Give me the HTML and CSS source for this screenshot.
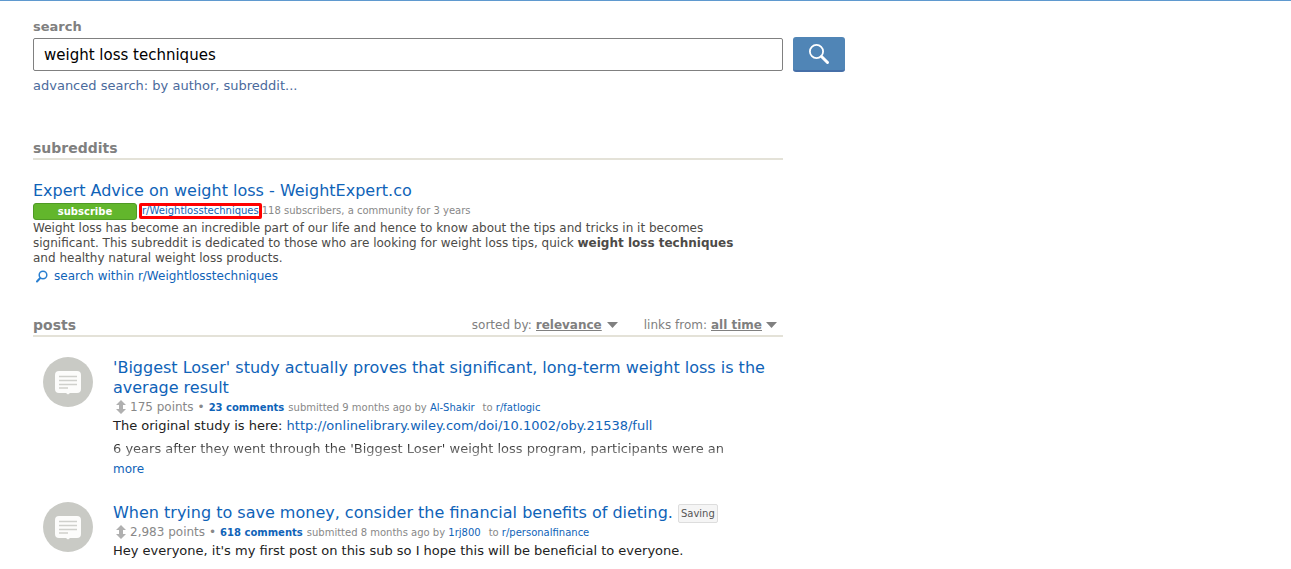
FILE: index.html
```html
<!DOCTYPE html>
<html lang="en">
<head>
    <meta charset="UTF-8">
    <meta name="viewport" content="width=device-width, initial-scale=1.0">
    <link rel="stylesheet" href="styles.css">
    <title>search results - weight loss techniques</title>
</head>
<body>
    <main class="content">
        <form class="search-form">
            <label class="search-label" for="search-input">search</label>
            <div class="search-row">
                <input type="text" id="search-input" class="search-input" name="q" value="weight loss techniques">
                <button type="submit" class="search-button" aria-label="search">
                    <svg width="22" height="22" viewBox="0 0 22 22">
                        <circle cx="8.5" cy="8.5" r="6.6" fill="none" stroke="#fff" stroke-width="1.8"/>
                        <path d="M13.5 13.5L19.5 19.5" stroke="#fff" stroke-width="3" stroke-linecap="round"/>
                    </svg>
                </button>
            </div>
            <a class="advanced" href="#">advanced search: by author, subreddit...</a>
        </form>

        <section class="subreddits">
            <header class="section-header">
                <h2 class="section-title">subreddits</h2>
            </header>
            <div class="subreddit">
                <a class="result-title" href="#">Expert Advice on weight loss - WeightExpert.co</a>
                <div class="subreddit-meta">
                    <button type="button" class="subscribe">subscribe</button>
                    <a class="highlighted" href="#">r/Weightlosstechniques</a>
                    <span>118 subscribers, a community for 3 years</span>
                </div>
                <p class="description">Weight loss has become an incredible part of our life and hence to know about the tips and tricks in it becomes significant. This subreddit is dedicated to those who are looking for weight loss tips, quick <strong>weight loss techniques</strong> and healthy natural weight loss products.</p>
                <a class="search-within" href="#">
                    <svg width="12" height="14" viewBox="0 0 12 14" fill="none" stroke="#2a7fd0" stroke-linecap="round">
                        <circle cx="7" cy="6" r="3.8" stroke-width="1.5"/>
                        <path d="M4 9.300L1 12.500" stroke-width="2"/>
                    </svg>
                    search within r/Weightlosstechniques
                </a>
            </div>
        </section>

        <section class="posts">
            <header class="section-header">
                <h2 class="section-title">posts</h2>
                <div class="menus">
                    <div class="menu">
                        <label for="sort">sorted by:</label>
                        <select id="sort" class="menu-select"><option>relevance</option></select>
                        <svg width="11" height="6" viewBox="0 0 11 6"><path d="M0 0h11L5.500 6z" fill="#808080"/></svg>
                    </div>
                    <div class="menu">
                        <label for="range">links from:</label>
                        <select id="range" class="menu-select"><option>all time</option></select>
                        <svg width="11" height="6" viewBox="0 0 11 6"><path d="M0 0h11L5.500 6z" fill="#808080"/></svg>
                    </div>
                </div>
            </header>

            <article class="post">
                <svg class="thumbnail" width="50" height="50" viewBox="0 0 50 50">
                    <circle cx="25" cy="25" r="25" fill="#c9cac5"/>
                    <path d="M16 14h18q4 0 4 4v14q0 4-4 4h-7l-2 1.500-2-1.500h-7q-4 0-4-4V18q0-4 4-4z" fill="#fcfcfb"/>
                    <path d="M16 19.500h18M16 23.500h18M16 27.500h18M16 31h9" stroke="#cfd0cc" stroke-width="1.600"/>
                </svg>
                <div class="post-body">
                    <a class="result-title" href="#">'Biggest Loser' study actually proves that significant, long-term weight loss is the average result</a>
                    <div class="post-meta">
                        <svg class="score-icon" width="10" height="14" viewBox="0 0 10 14"><path d="M5 0l5 5H7v4h3l-5 5-5-5h3V5H0z" fill="#b0b0b0"/></svg>
                        <span class="score">175 points</span>
                        <span class="dot">•</span>
                        <a class="comments" href="#">23 comments</a>
                        <span>submitted 9 months ago by <a href="#">Al-Shakir</a></span>
                        <span class="where">to <a href="#">r/fatlogic</a></span>
                    </div>
                    <div class="excerpt">
                        <p>The original study is here: <a href="#">http://onlinelibrary.wiley.com/doi/10.1002/oby.21538/full</a></p>
                        <p class="faded">6 years after they went through the 'Biggest Loser' weight loss program, participants were an</p>
                    </div>
                    <a class="more" href="#">more</a>
                </div>
            </article>

            <article class="post">
                <svg class="thumbnail" width="50" height="50" viewBox="0 0 50 50">
                    <circle cx="25" cy="25" r="25" fill="#c9cac5"/>
                    <path d="M16 14h18q4 0 4 4v14q0 4-4 4h-7l-2 1.500-2-1.500h-7q-4 0-4-4V18q0-4 4-4z" fill="#fcfcfb"/>
                    <path d="M16 19.500h18M16 23.500h18M16 27.500h18M16 31h9" stroke="#cfd0cc" stroke-width="1.600"/>
                </svg>
                <div class="post-body">
                    <div class="title-row">
                        <a class="result-title" href="#">When trying to save money, consider the financial benefits of dieting.</a>
                        <span class="flair">Saving</span>
                    </div>
                    <div class="post-meta">
                        <svg class="score-icon" width="10" height="14" viewBox="0 0 10 14"><path d="M5 0l5 5H7v4h3l-5 5-5-5h3V5H0z" fill="#b0b0b0"/></svg>
                        <span class="score">2,983 points</span>
                        <span class="dot">•</span>
                        <a class="comments" href="#">618 comments</a>
                        <span>submitted 8 months ago by <a href="#">1rj800</a></span>
                        <span class="where">to <a href="#">r/personalfinance</a></span>
                    </div>
                    <div class="excerpt">
                        <p>Hey everyone, it's my first post on this sub so I hope this will be beneficial to everyone.</p>
                    </div>
                </div>
            </article>
        </section>
    </main>
</body>
</html>
```

FILE: styles.css
```css
body {
    margin: 0;
    border-top: 1px solid #5f99cf;
    background: #fff;
    color: #222;
    font-family: Verdana, "DejaVu Sans", sans-serif;
    font-size: 13px;
    line-height: 20px;
}

a {
    color: #0f63b8;
    text-decoration: none;
}

h2,
p {
    margin: 0;
}

.content {
    max-width: 812px;
    padding: 16px 33px 0;
}

.search-label,
.section-title {
    color: #808080;
    font-weight: bold;
    line-height: 20px;
}

.section-title {
    font-size: 14px;
}

/* search box */
.search-form {
    display: flex;
    flex-direction: column;
}

.search-row {
    display: flex;
    align-items: center;
    gap: 10px;
}

.search-input {
    flex: 1;
    min-width: 0;
    height: 33px;
    box-sizing: border-box;
    padding: 0 10px;
    border: 1px solid #808080;
    border-radius: 2px;
    color: #000;
    font-family: inherit;
    font-size: 15px;
}

.search-button {
    display: flex;
    align-items: center;
    justify-content: center;
    width: 52px;
    height: 35px;
    padding: 0;
    border: none;
    border-bottom: 2px solid #466fa8;
    border-radius: 3px;
    background: #5085b6;
    cursor: pointer;
}

.advanced {
    align-self: flex-start;
    margin-top: 4px;
    color: #4a6a9c;
}

/* result sections */
.subreddits,
.posts {
    max-width: 750px;
}

.subreddits {
    margin-top: 42px;
}

.posts {
    margin-top: 29px;
}

.section-header {
    display: flex;
    justify-content: space-between;
    border-bottom: 2px solid #e4e2d8;
}

.result-title {
    display: block;
    font-size: 16px;
    line-height: 20px;
}

.subreddit {
    display: flex;
    flex-direction: column;
    align-items: flex-start;
    padding-top: 21px;
}

.subreddit-meta {
    display: flex;
    align-items: center;
    height: 20px;
    color: #888;
    font-size: 10px;
}

.subscribe {
    width: 104px;
    height: 17px;
    margin-right: 2px;
    padding: 0;
    border: 1px solid #4f9a25;
    border-radius: 3px;
    background: #62b62c;
    color: #fff;
    font-family: inherit;
    font-size: 10px;
    font-weight: bold;
    line-height: 15px;
    cursor: pointer;
}

.highlighted {
    border: 3px solid #f00;
    border-radius: 2px;
    line-height: 10px;
}

.description {
    max-width: 710px;
    color: #4d4b48;
    font-size: 12px;
    line-height: 15px;
}

.search-within {
    display: flex;
    align-items: center;
    gap: 6px;
    padding-left: 3px;
    font-size: 12px;
}

.menus {
    display: flex;
    gap: 26px;
    margin-right: 6px;
    color: #808080;
    font-size: 12px;
}

.menu {
    display: flex;
    align-items: center;
    gap: 4px;
}

.menu-select {
    appearance: none;
    padding: 0;
    border: none;
    background: none;
    color: #808080;
    font-family: inherit;
    font-size: 12px;
    font-weight: bold;
    text-decoration: underline;
    cursor: pointer;
}

/* posts */
.post {
    display: flex;
    gap: 20px;
    margin-top: 20px;
    padding-left: 10px;
}

.post + .post {
    margin-top: 23px;
}

.thumbnail {
    flex: none;
}

.post-body {
    flex: 1;
    min-width: 0;
    padding-top: 1px;
}

.title-row {
    display: flex;
    align-items: center;
    gap: 5px;
    height: 20px;
}

.flair {
    padding: 0 2px;
    border: 1px solid #ddd;
    border-radius: 2px;
    background: #f5f5f5;
    color: #555;
    font-size: 10px;
    line-height: 17px;
}

.post-meta {
    display: flex;
    align-items: baseline;
    gap: 4px;
    height: 18px;
    padding-left: 3px;
    color: #888;
    font-size: 10px;
    line-height: 18px;
}

.score-icon {
    align-self: center;
}

.score,
.dot {
    font-size: 12px;
}

.comments {
    font-weight: bold;
}

.where {
    margin-left: 4px;
}

.faded {
    margin-top: 3px;
    background: linear-gradient(#222 20%, #aaa);
    background-clip: text;
    color: transparent;
}

.more {
    font-size: 12px;
}
```
